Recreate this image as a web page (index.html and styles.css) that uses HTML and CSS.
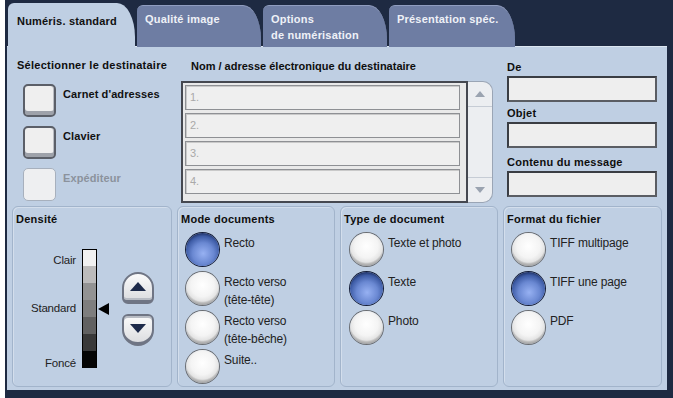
FILE: index.html
```html
<!DOCTYPE html>
<html lang="fr">
<head>
<meta charset="utf-8">
<title>Numéris. standard</title>
<link rel="stylesheet" href="styles.css">
</head>
<body>
<div class="screen">
  <div class="tabs">
    <div class="tab active"><span>Numéris. standard</span></div>
    <div class="tab"><span>Qualité image</span></div>
    <div class="tab"><span>Options<br>de numérisation</span></div>
    <div class="tab"><span>Présentation spéc.</span></div>
  </div>
  <div class="panel">
    <div class="top">
      <div class="dest">
        <div class="h">Sélectionner le destinataire</div>
        <div class="dbtns">
          <div class="drow"><div class="dbtn"></div><span class="dlabel">Carnet d'adresses</span></div>
          <div class="drow"><div class="dbtn"></div><span class="dlabel">Clavier</span></div>
          <div class="drow disabled"><div class="dbtn"></div><span class="dlabel">Expéditeur</span></div>
        </div>
      </div>
      <div class="listcol">
        <div class="h lh">Nom / adresse électronique du destinataire</div>
        <div class="listwrap">
          <div class="list">
            <div class="row">1.</div>
            <div class="row">2.</div>
            <div class="row">3.</div>
            <div class="row">4.</div>
          </div>
          <div class="scroll">
            <div class="sbtn sup"><svg width="10" height="6" viewBox="0 0 10 6"><path d="M0 6 L5 0 L10 6 Z" fill="#9aa3b0"/></svg></div>
            <div class="smid"></div>
            <div class="sbtn sdown"><svg width="10" height="6" viewBox="0 0 10 6"><path d="M0 0 L5 6 L10 0 Z" fill="#9aa3b0"/></svg></div>
          </div>
        </div>
      </div>
      <div class="mail">
        <div class="h">De</div>
        <div class="field"></div>
        <div class="h">Objet</div>
        <div class="field"></div>
        <div class="h h3">Contenu du message</div>
        <div class="field"></div>
      </div>
    </div>
    <div class="groups">
      <div class="group">
        <div class="gh">Densité</div>
        <div class="dens">
          <div class="scale">
            <div class="slabel r1">Clair</div>
            <div class="slabel r4">Standard</div>
            <div class="slabel r7">Foncé</div>
            <div class="cell c1"></div>
            <div class="cell c2"></div>
            <div class="cell c3"></div>
            <div class="cell c4"></div>
            <div class="cell c5"></div>
            <div class="cell c6"></div>
            <div class="cell c7"></div>
            <div class="pointer"><svg width="11" height="12" viewBox="0 0 11 12"><path d="M0 6 L11 0 L11 12 Z" fill="#000"/></svg></div>
          </div>
          <div class="arrows">
            <div class="abtn aup"><svg width="16" height="9" viewBox="0 0 16 9"><path d="M0 9 L8 0 L16 9 Z" fill="#1d2a4a"/></svg></div>
            <div class="abtn adown"><svg width="16" height="9" viewBox="0 0 16 9"><path d="M0 0 L8 9 L16 0 Z" fill="#1d2a4a"/></svg></div>
          </div>
        </div>
      </div>
      <div class="group">
        <div class="gh">Mode documents</div>
        <div class="opts">
          <div class="opt"><div class="radio on"></div><div class="olabel">Recto</div></div>
          <div class="opt"><div class="radio"></div><div class="olabel">Recto verso<br>(tête-tête)</div></div>
          <div class="opt"><div class="radio"></div><div class="olabel">Recto verso<br>(tête-bêche)</div></div>
          <div class="opt"><div class="radio"></div><div class="olabel">Suite..</div></div>
        </div>
      </div>
      <div class="group">
        <div class="gh">Type de document</div>
        <div class="opts type">
          <div class="opt"><div class="radio"></div><div class="olabel">Texte et photo</div></div>
          <div class="opt"><div class="radio on"></div><div class="olabel">Texte</div></div>
          <div class="opt"><div class="radio"></div><div class="olabel">Photo</div></div>
        </div>
      </div>
      <div class="group">
        <div class="gh">Format du fichier</div>
        <div class="opts">
          <div class="opt"><div class="radio"></div><div class="olabel">TIFF multipage</div></div>
          <div class="opt"><div class="radio on"></div><div class="olabel">TIFF une page</div></div>
          <div class="opt"><div class="radio"></div><div class="olabel">PDF</div></div>
        </div>
      </div>
    </div>
  </div>
</div>
</body>
</html>
```

FILE: styles.css
```css
* { box-sizing: border-box; }
html, body { margin: 0; padding: 0; background: #ffffff; }
body {
  font-family: "Liberation Sans", Arial, sans-serif;
  font-size: 11px;
  color: #1a1a1a;
}
.screen {
  margin-left: 5px;
  width: 668px;
  height: 398px;
  background: #1e2a42;
  padding: 3px 6px 8px 2px;
  display: flex;
  flex-direction: column;
}
/* Tabs */
.tabs {
  height: 44px;
  display: flex;
  align-items: flex-end;
  gap: 2px;
  padding-left: 1px;
  position: relative;
  z-index: 1;
  margin-bottom: -1px;
}
.tab {
  width: 124px;
  height: 42px;
  background: #6e7da3;
  border-top: 1px solid #909dbf;
  border-radius: 6px 18px 0 0 / 6px 34px 0 0;
  color: #eef1f7;
  font-weight: bold;
  letter-spacing: 0.2px;
  line-height: 16px;
  padding: 5px 0 0 8px;
}
.tab.active {
  width: 127px;
  height: 44px;
  background: #bfcfe3;
  border-top: none;
  color: #111;
  padding: 10px 0 0 9px;
}
.tab:last-child { width: 126px; }
/* Panel */
.panel {
  flex: 1;
  background: #bfcfe3;
  border-top: 1px solid #dce6f1;
  display: flex;
  flex-direction: column;
}
.h {
  font-weight: bold;
  letter-spacing: 0.25px;
  line-height: 12px;
  color: #0e0e0e;
  white-space: nowrap;
}
.top {
  height: 159px;
  display: flex;
  padding-left: 10px;
}
.dest { width: 164px; padding-top: 12px; }
.dbtns {
  margin-top: 13px;
  margin-left: 6px;
  display: flex;
  flex-direction: column;
  gap: 9px;
}
.drow { display: flex; gap: 7px; align-items: flex-start; }
.dbtn {
  width: 33px;
  height: 33px;
  border-radius: 5px;
  background: #efefef;
  border: 2px solid #5b5f68;
  box-shadow: inset 0 -4px 0 #9ea2aa, inset -1px 0 0 #b9bcc2;
}
.dlabel {
  font-weight: bold;
  letter-spacing: 0.1px;
  line-height: 12px;
  margin-top: 4px;
  color: #111;
}
.drow.disabled .dbtn {
  border: 1px solid #a7b0bd;
  background: #eeeff1;
  box-shadow: none;
}
.drow.disabled .dlabel { color: #8b929c; }
/* list */
.listcol { width: 312px; padding-top: 13px; }
.lh { padding-left: 10px; letter-spacing: 0; }
.listwrap { display: flex; margin-top: 9px; height: 122px; }
.list {
  width: 287px;
  border: 2px solid #454850;
  background: #e9e9e9;
  padding: 2px 6px 0 2px;
  display: flex;
  flex-direction: column;
  gap: 3px;
}
.row {
  height: 25px;
  background: #efefef;
  border: 1px solid #8e9094;
  box-shadow: inset 1px 1px 0 #c9c9c9;
  color: #a9a9a9;
  line-height: 23px;
  padding-left: 4px;
  font-size: 11px;
}
.scroll {
  width: 25px;
  border: 1px solid #9aa5b5;
  border-left: none;
  border-radius: 0 10px 10px 0;
  background: #eceef1;
  display: flex;
  flex-direction: column;
}
.sbtn {
  height: 25px;
  display: flex;
  align-items: center;
  justify-content: center;
}
.sup { border-bottom: 1px solid #c6ccd5; }
.sdown { border-top: 1px solid #c6ccd5; }
.smid { flex: 1; }
/* mail */
.mail { width: 150px; margin-left: 14px; padding-top: 14px; display: flex; flex-direction: column; }
.mail .h { margin-bottom: 3px; }
.mail .h3 { margin-top: 3px; }
.field {
  height: 26px;
  border: 2px solid #3a3d43;
  border-bottom-color: #5a5d63;
  border-right-color: #5a5d63;
  background: #eeeeee;
  margin-bottom: 5px;
}
/* Groups */
.groups {
  flex: 1;
  display: grid;
  grid-template-columns: 160px 158px 158px 159px;
  gap: 5px;
  padding: 0 5px 3px 5px;
}
.group {
  border: 1px solid #a2b4cb;
  border-radius: 6px;
  box-shadow: inset 1px 1px 0 #d3deec;
  padding: 6px 0 0 0;
}
.gh {
  font-weight: bold;
  letter-spacing: 0.25px;
  line-height: 12px;
  color: #0e0e0e;
  padding-left: 3px;
  white-space: nowrap;
}
.dens {
  display: flex;
  align-items: center;
  margin-top: 24px;
}
.scale {
  display: grid;
  grid-template-columns: 69px 15px 12px;
  grid-template-rows: repeat(7, 17px);
}
.slabel {
  grid-column: 1;
  text-align: right;
  padding-right: 6px;
  line-height: 17px;
  font-size: 11.5px;
  letter-spacing: -0.2px;
  color: #222;
}
.r1 { grid-row: 1; padding-top: 3px; }
.r4 { grid-row: 4; }
.r7 { grid-row: 7; padding-top: 4px; }
.cell { grid-column: 2; border-left: 1px solid #000; border-right: 1px solid #000; }
.c1 { grid-row: 1; background: #f1f1f1; border-top: 1px solid #000; }
.c2 { grid-row: 2; background: #bcbbbb; }
.c3 { grid-row: 3; background: #939393; }
.c4 { grid-row: 4; background: #7e7e7e; }
.c5 { grid-row: 5; background: #616161; }
.c6 { grid-row: 6; background: #393939; }
.c7 { grid-row: 7; background: #050505; }
.pointer { grid-column: 3; grid-row: 4; display: flex; align-items: center; padding-left: 1px; }
.arrows { display: flex; flex-direction: column; gap: 10px; margin-left: 13px; }
.abtn {
  width: 32px;
  height: 32px;
  background: linear-gradient(#fbfbfb, #dcdde0);
  border: 2px solid #6f7584;
  display: flex;
  align-items: center;
  justify-content: center;
}
.aup {
  border-radius: 16px 16px 6px 6px;
  border-bottom-width: 4px;
  box-shadow: inset 0 -2px 0 #b8bcc4;
}
.adown {
  border-radius: 6px 6px 16px 16px;
  border-bottom-width: 4px;
  box-shadow: inset 0 2px 0 #b8bcc4;
}
.opts {
  display: flex;
  flex-direction: column;
  gap: 6px;
  margin-top: 8px;
  padding-left: 8px;
}
.opts.type { padding-left: 9px; }
.opt { display: flex; height: 33px; gap: 5px; }
.radio {
  flex: none;
  width: 33px;
  height: 33px;
  border-radius: 50%;
  background: radial-gradient(circle at 50% 40%, #ffffff 0%, #f4f4f4 45%, #e4e4e4 62%, #bdbdbd 68%, #8f8f8f 82%, #5c5c5c 100%);
  box-shadow: 0 0 0 1px #6a6d72;
}
.radio.on {
  background: radial-gradient(circle at 52% 62%, #97b1f2 0%, #6a88d2 40%, #3e5ca6 64%, #263b74 74%, #1a2850 88%, #101a36 100%);
  box-shadow: 0 0 0 1px #141d38;
}
.olabel {
  margin-top: 1px;
  line-height: 18px;
  font-size: 12px;
  letter-spacing: -0.15px;
  color: #222;
  white-space: nowrap;
}
```
